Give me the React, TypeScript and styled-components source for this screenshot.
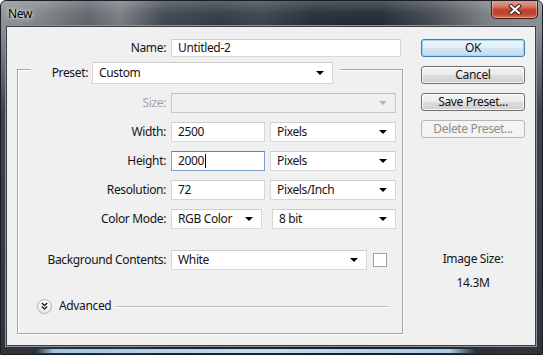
import React from 'react';
import styled, { createGlobalStyle } from 'styled-components';

const Global = createGlobalStyle`
  html, body { margin: 0; padding: 0; background: #ffffff; }
  body {
    width: 543px; height: 355px; overflow: hidden;
    font-family: "Noto Sans", "Open Sans", sans-serif;
    font-size: 12px;
    letter-spacing: -0.35px;
    -webkit-font-smoothing: antialiased;
  }
`;

const Win = styled.div`
  box-sizing: border-box;
  width: 543px;
  height: 355px;
  display: flex;
  flex-direction: column;
  border: 1px solid #1a1f25;
  border-radius: 6px 6px 0 0;
  overflow: hidden;
  background:
    linear-gradient(180deg, rgba(0,0,0,0) 0px, rgba(0,0,0,0) 28px, rgba(22,27,33,0.65) 110px, rgba(22,27,33,0.78) 100%),
    linear-gradient(90deg, #8d9093 0%, #7c8084 8%, #5b6268 16%, #767c82 22%, #3e464e 30%, #2f3841 40%, #39424b 48%, #222b34 58%, #1f2831 70%, #434a51 80%, #7a7e82 90%, #8b8e91 100%);
`;

const TitleBar = styled.div`
  height: 26px;
  flex: none;
  display: flex;
  align-items: flex-start;
  justify-content: space-between;
  padding: 0 4px 0 7px;
  background: linear-gradient(180deg, rgba(255,255,255,0.22) 0, rgba(255,255,255,0.06) 45%, rgba(255,255,255,0) 100%);
`;

const Title = styled.span`
  margin-top: 5px;
  line-height: 16px;
  font-size: 12px;
  color: #000;
  text-shadow: 0 0 6px rgba(255,255,255,0.9), 0 0 3px rgba(255,255,255,0.8);
`;

const CloseButton = styled.div`
  margin-top: -1px;
  width: 47px;
  height: 19px;
  box-sizing: border-box;
  display: flex;
  align-items: center;
  justify-content: center;
  border: 1px solid #3a1d1b;
  border-top: none;
  border-radius: 0 0 5px 5px;
  background: linear-gradient(180deg, #e3a496 0%, #d57c69 35%, #c0402c 55%, #be4731 80%, #d47552 100%);
  box-shadow: inset 0 0 0 1px rgba(255,255,255,0.35);
`;

const Body = styled.div`
  flex: 1;
  display: flex;
  padding: 0 7px 0 6px;
`;

const Client = styled.div`
  flex: 1;
  display: grid;
  grid-template-columns: 1fr 104px;
  padding: 12px 10px 0 10px;
  background: #f0f0f0;
  box-shadow: 0 0 0 1px #3b4148, 0 0 0 2px #8d9296;
  color: #141414;
`;

const BottomEdge = styled.div`
  height: 8px;
  flex: none;
  display: flex;
  align-items: flex-end;
  padding: 0 66px 1px 35px;
`;

const Streak = styled.div`
  flex: 1;
  height: 4px;
  background: linear-gradient(90deg, rgba(150,190,228,0) 0%, #9fc4e6 4%, #c2dcf2 50%, #a9cbea 94%, rgba(150,190,228,0) 100%);
`;

const LeftCol = styled.div`
  width: 386px;
  display: flex;
  flex-direction: column;
`;

const NameRow = styled.div`
  display: grid;
  grid-template-columns: 149px 230px;
  column-gap: 5px;
  align-items: center;
`;

const Label = styled.span<{ $disabled?: boolean }>`
  text-align: right;
  white-space: nowrap;
  line-height: 16px;
  color: ${p => (p.$disabled ? '#a6a6a6' : '#141414')};
`;

const Box = styled.div<{ $w?: number; $h?: number; $focused?: boolean; $disabled?: boolean }>`
  box-sizing: border-box;
  width: ${p => (p.$w ? `${p.$w}px` : 'auto')};
  height: ${p => p.$h ?? 20}px;
  display: flex;
  align-items: center;
  padding: 0 6px 0 6px;
  background: ${p => (p.$disabled ? '#f0f0f0' : '#ffffff')};
  border: 1px solid ${p => (p.$focused ? '#7da2ce' : p.$disabled ? '#c9c9c9' : '#d7d7d7')};
  border-top-color: ${p => (p.$focused ? '#5586bf' : p.$disabled ? '#bdbdbd' : '#cdcdcd')};
  white-space: nowrap;
  line-height: 16px;
  color: #141414;
`;

const BoxText = styled.span`
  flex: 1;
  display: flex;
  align-items: center;
`;

const Caret = styled.span`
  display: inline-block;
  width: 1px;
  height: 14px;
  margin-left: 1px;
  background: #000;
`;

const Arrow = styled.span<{ $disabled?: boolean }>`
  width: 0;
  height: 0;
  margin-right: 2px;
  border-left: 4px solid transparent;
  border-right: 4px solid transparent;
  border-top: 4px solid ${p => (p.$disabled ? '#b5b5b5' : '#000')};
`;

const Group = styled.div`
  margin-top: 12px;
  border: 1px solid #a7a7a7;
  box-shadow: inset 1px 1px 0 #ffffff, 1px 1px 0 #ffffff;
  display: flex;
  flex-direction: column;
  padding-bottom: 19px;
`;

const GroupHeader = styled.div`
  align-self: flex-start;
  margin: -8px 0 0 13px;
  padding: 0 7px 0 0;
  display: flex;
  align-items: center;
  column-gap: 4px;
  background: #f0f0f0;
`;

const HeaderLabel = styled(Label)`
  width: 57px;
`;

const Rows = styled.div`
  margin-top: 9px;
  display: grid;
  grid-template-columns: 148px auto;
  column-gap: 5px;
  row-gap: 9px;
  align-items: center;
`;

const Pair = styled.div<{ $gap: number }>`
  display: flex;
  align-items: center;
  column-gap: ${p => p.$gap}px;
`;

const BgRow = styled.div`
  margin-top: 21px;
  display: grid;
  grid-template-columns: 148px auto;
  column-gap: 5px;
  align-items: center;
`;

const Swatch = styled.div`
  width: 14px;
  height: 14px;
  box-sizing: border-box;
  background: #ffffff;
  border: 1px solid #a0a0a0;
`;

const AdvancedRow = styled.div`
  margin: 28px 14px 0 19px;
  height: 16px;
  display: flex;
  align-items: center;
`;

const Disclosure = styled.div`
  width: 15px;
  height: 15px;
  box-sizing: border-box;
  border-radius: 50%;
  border: 1px solid #b4b4b4;
  background: radial-gradient(circle at 50% 35%, #ffffff 0%, #f4f4f4 50%, #d9d9d9 100%);
  display: flex;
  align-items: center;
  justify-content: center;
`;

const AdvancedText = styled.span`
  margin-left: 7px;
  line-height: 16px;
`;

const Rule = styled.div`
  flex: 1;
  margin-left: 5px;
  height: 1px;
  background: #b9b9b9;
  box-shadow: 0 1px 0 #ffffff;
`;

const RightCol = styled.div`
  display: flex;
  flex-direction: column;
  align-items: stretch;
`;

const Buttons = styled.div`
  display: flex;
  flex-direction: column;
  row-gap: 9px;
`;

const Button = styled.div<{ $default?: boolean; $disabled?: boolean }>`
  box-sizing: border-box;
  height: 18px;
  display: flex;
  align-items: center;
  justify-content: center;
  border-radius: 3px;
  line-height: 16px;
  border: 1px solid ${p => (p.$default ? '#3c7fb1' : p.$disabled ? '#b5b8bb' : '#707070')};
  color: ${p => (p.$disabled ? '#8d8d8d' : '#141414')};
  background: ${p =>
    p.$disabled
      ? '#f4f4f4'
      : p.$default
      ? 'linear-gradient(180deg, #eef6fc 0%, #e2eef8 48%, #d3e4f2 52%, #c6dcee 100%)'
      : 'linear-gradient(180deg, #f3f3f3 0%, #ebebeb 48%, #dddddd 52%, #cfcfcf 100%)'};
  box-shadow: ${p =>
    p.$default ? 'inset 0 0 0 1px #9fd5f4' : p.$disabled ? 'none' : 'inset 0 0 0 1px rgba(255,255,255,0.8)'};
`;

const SizeInfo = styled.div`
  margin-top: 113px;
  display: flex;
  flex-direction: column;
  align-items: center;
  row-gap: 8px;
  line-height: 16px;
`;

const CloseGlyph = () => (
  <svg width="14" height="11" viewBox="0 0 14 11">
    <path d="M3 2 L11 9 M11 2 L3 9" stroke="#3a1512" strokeWidth="4" strokeLinecap="square" fill="none" />
    <path d="M3 2 L11 9 M11 2 L3 9" stroke="#ffffff" strokeWidth="2.2" strokeLinecap="square" fill="none" />
  </svg>
);

const DoubleChevron = () => (
  <svg width="7" height="8" viewBox="0 0 7 8">
    <path d="M0.8 1 L3.5 3.6 L6.2 1 M0.8 4.4 L3.5 7 L6.2 4.4" stroke="#222" strokeWidth="1.4" fill="none" />
  </svg>
);

const Select = ({ w, h, text, disabled }: { w: number; h?: number; text?: string; disabled?: boolean }) => (
  <Box $w={w} $h={h} $disabled={disabled}>
    <BoxText>{text}</BoxText>
    <Arrow $disabled={disabled} />
  </Box>
);

export default function App() {
  return (
    <>
      <Global />
      <Win>
        <TitleBar>
          <Title>New</Title>
          <CloseButton>
            <CloseGlyph />
          </CloseButton>
        </TitleBar>
        <Body>
          <Client>
            <LeftCol>
              <NameRow>
                <Label>Name:</Label>
                <Box $w={230} $h={18}>
                  <BoxText>Untitled-2</BoxText>
                </Box>
              </NameRow>
              <Group>
                <GroupHeader>
                  <HeaderLabel>Preset:</HeaderLabel>
                  <Select w={241} h={22} text="Custom" />
                </GroupHeader>
                <Rows>
                  <Label $disabled>Size:</Label>
                  <Select w={225} disabled />
                  <Label>Width:</Label>
                  <Pair $gap={5}>
                    <Box $w={94}>
                      <BoxText>2500</BoxText>
                    </Box>
                    <Select w={126} text="Pixels" />
                  </Pair>
                  <Label>Height:</Label>
                  <Pair $gap={5}>
                    <Box $w={94} $focused>
                      <BoxText>
                        2000
                        <Caret />
                      </BoxText>
                    </Box>
                    <Select w={126} text="Pixels" />
                  </Pair>
                  <Label>Resolution:</Label>
                  <Pair $gap={5}>
                    <Box $w={94}>
                      <BoxText>72</BoxText>
                    </Box>
                    <Select w={126} text="Pixels/Inch" />
                  </Pair>
                  <Label>Color Mode:</Label>
                  <Pair $gap={10}>
                    <Select w={91} text="RGB Color" />
                    <Select w={124} text="8 bit" />
                  </Pair>
                </Rows>
                <BgRow>
                  <Label>Background Contents:</Label>
                  <Pair $gap={6}>
                    <Select w={196} text="White" />
                    <Swatch />
                  </Pair>
                </BgRow>
                <AdvancedRow>
                  <Disclosure>
                    <DoubleChevron />
                  </Disclosure>
                  <AdvancedText>Advanced</AdvancedText>
                  <Rule />
                </AdvancedRow>
              </Group>
            </LeftCol>
            <RightCol>
              <Buttons>
                <Button $default>OK</Button>
                <Button>Cancel</Button>
                <Button>Save Preset...</Button>
                <Button $disabled>Delete Preset...</Button>
              </Buttons>
              <SizeInfo>
                <span>Image Size:</span>
                <span>14.3M</span>
              </SizeInfo>
            </RightCol>
          </Client>
        </Body>
        <BottomEdge>
          <Streak />
        </BottomEdge>
      </Win>
    </>
  );
}
